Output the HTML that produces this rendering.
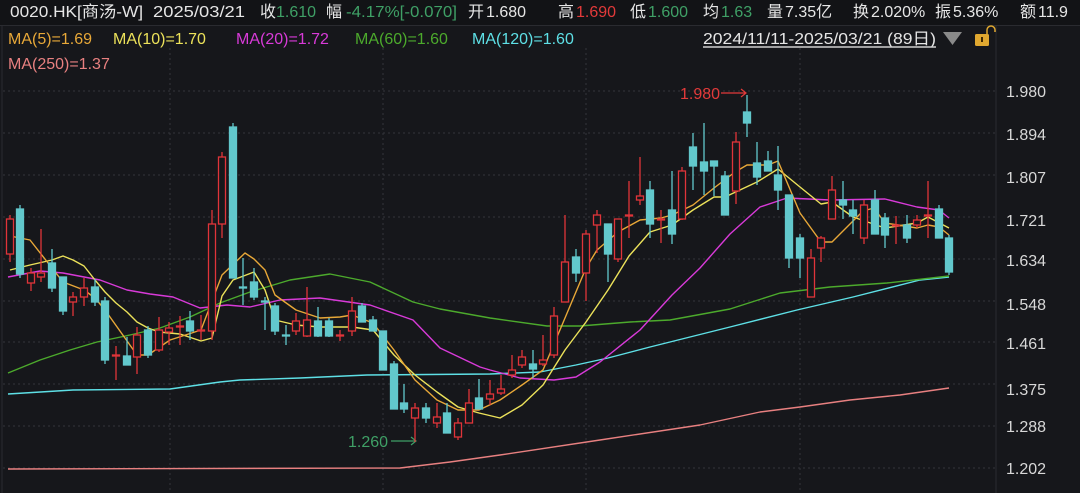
<!DOCTYPE html>
<html><head><meta charset="utf-8"><style>
html,body{margin:0;padding:0;background:#16171b;}
body{width:1080px;height:493px;overflow:hidden;position:relative;font-family:"Liberation Sans","Noto Sans CJK SC",sans-serif;}
svg{position:absolute;left:0;top:0;}
.t{font-family:"Liberation Sans","Noto Sans CJK SC",sans-serif;}
</style></head><body>
<svg width="1080" height="493" viewBox="0 0 1080 493">
<rect x="0" y="0" width="1080" height="493" fill="#16171b"/>
<rect x="0" y="0" width="1080" height="25" fill="#121316"/>
<line x1="0" y1="25.5" x2="1080" y2="25.5" stroke="#2a2b30"/>
<line x1="2" y1="26" x2="2" y2="493" stroke="#2a2b30"/>
<line x1="996" y1="26" x2="996" y2="493" stroke="#2a2b30"/>
<g stroke="#34353b" stroke-dasharray="2,3" stroke-width="1">
<line x1="3" y1="91" x2="995" y2="91"/><line x1="3" y1="133" x2="995" y2="133"/><line x1="3" y1="175" x2="995" y2="175"/><line x1="3" y1="217" x2="995" y2="217"/><line x1="3" y1="259" x2="995" y2="259"/><line x1="3" y1="301" x2="995" y2="301"/><line x1="3" y1="342" x2="995" y2="342"/><line x1="3" y1="384" x2="995" y2="384"/><line x1="3" y1="426" x2="995" y2="426"/><line x1="3" y1="468" x2="995" y2="468"/>
<line x1="170" y1="48" x2="170" y2="493"/><line x1="383" y1="48" x2="383" y2="493"/><line x1="586" y1="48" x2="586" y2="493"/><line x1="800" y1="48" x2="800" y2="493"/>
</g>
<g class="t" fill="#e6e6e6" font-size="16">
<text x="10" y="17" textLength="133" lengthAdjust="spacingAndGlyphs">0020.HK[商汤-W]</text>
<text x="153" y="17" textLength="92" lengthAdjust="spacingAndGlyphs">2025/03/21</text>
<text x="260" y="17">收</text><text x="276" y="17" fill="#3fa066">1.610</text>
<text x="326" y="17">幅</text><text x="346" y="17" fill="#3fa066" textLength="111" lengthAdjust="spacingAndGlyphs">-4.17%[-0.070]</text>
<text x="468" y="17">开</text><text x="486" y="17">1.680</text>
<text x="558" y="17">高</text><text x="576" y="17" fill="#e23a3a">1.690</text>
<text x="630" y="17">低</text><text x="648" y="17" fill="#3fa066">1.600</text>
<text x="703" y="17">均</text><text x="721" y="17" fill="#3fa066">1.63</text>
<text x="767" y="17">量</text><text x="785" y="17">7.35亿</text>
<text x="853" y="17">换</text><text x="871" y="17">2.020%</text>
<text x="935" y="17">振</text><text x="953" y="17">5.36%</text>
<text x="1020" y="17">额</text><text x="1038" y="17">11.9</text>
</g>
<g class="t" font-size="16">
<text x="8" y="44" fill="#e8a838">MA(5)=1.69</text>
<text x="113" y="44" fill="#ece25a">MA(10)=1.70</text>
<text x="236" y="44" fill="#d83ad8">MA(20)=1.72</text>
<text x="355" y="44" fill="#4caa2c">MA(60)=1.60</text>
<text x="472" y="44" fill="#5ee0e6">MA(120)=1.60</text>
<text x="8" y="69" fill="#e88080">MA(250)=1.37</text>
<text x="703" y="44" fill="#e6e6e6" textLength="233" lengthAdjust="spacingAndGlyphs">2024/11/11-2025/03/21 (89日)</text>
</g>
<line x1="703" y1="47" x2="936" y2="47" stroke="#cfcfcf" stroke-width="1.5"/>
<polygon points="943,32 962,32 952.5,45" fill="#8a8a8a"/>
<rect x="975" y="34" width="14" height="12" rx="1.5" fill="#e0a830"/>
<rect x="981" y="37" width="2" height="5" fill="#402800"/>
<path d="M987 34 V30 a4 4 0 0 1 8 0 V32" fill="none" stroke="#e0a830" stroke-width="1.5"/>
<g class="t" fill="#d8d8d8" font-size="16">
<text x="1006" y="97">1.980</text><text x="1006" y="140">1.894</text><text x="1006" y="183">1.807</text><text x="1006" y="226">1.721</text><text x="1006" y="266">1.634</text><text x="1006" y="310">1.548</text><text x="1006" y="349">1.461</text><text x="1006" y="395">1.375</text><text x="1006" y="432">1.288</text><text x="1006" y="474">1.202</text>
</g>
<text x="680" y="99" class="t" font-size="16" fill="#e23a3a">1.980</text>
<path d="M721 93 H746 M741 89 L746 93 L741 97" stroke="#e23a3a" fill="none" stroke-width="1.2"/>
<text x="348" y="447" class="t" font-size="16" fill="#3fa066">1.260</text>
<path d="M391 441 H416 M411 437 L416 441 L411 445" stroke="#3fa066" fill="none" stroke-width="1.2"/>
<g fill="none" stroke-width="1.4" stroke-linejoin="round">
<polyline stroke="#e88080" points="8,469 400,468 450,462 500,455 600,440 700,425 760,412 800,407 850,400 900,395 949,388"/>
<polyline stroke="#5ee0e6" points="8,394 73,390 170,389 220,382 240,380 300,378 367,375 490,374 540,372 576,365 608,358 650,347 690,337 730,327 797,310 853,297 920,280 949,277"/>
<polyline stroke="#4caa2c" points="8,373 40,360 70,350 97,342 130,335 160,328 190,317 220,303 250,292 290,280 330,274 370,282 413,302 440,309 490,318 547,326 580,326 630,322 670,320 730,309 780,293 830,287 887,283 949,276"/>
<polyline stroke="#d83ad8" points="8,277 40,271 63,273 100,280 127,290 150,294 173,297 200,308 227,305 250,307 280,300 320,298 370,305 413,320 440,348 480,367 490,370 520,378 554,380 576,377 600,362 640,330 672,295 700,268 730,234 760,207 787,198 830,200 885,199 917,207 939,210 949,218"/>
<polyline stroke="#ece25a" points="10,270 30,265 52,260 63,256 73,260 84,266 95,280 105,292 116,303 127,312 137,322 148,328 159,332 180,334 201,341 212,338 222,296 233,280 254,272 265,290 275,320 296,325 320,327 352,327 373,330 394,355 415,375 437,392 458,407 479,413 500,418 522,405 543,385 565,350 586,322 608,290 629,256 650,232 672,225 693,210 714,197 725,197 757,182 778,169 800,187 821,204 832,202 853,217 885,228 917,223 928,217 949,228"/>
<polyline stroke="#e8a838" points="10,236 30,240 63,282 84,290 95,298 105,310 137,355 148,355 170,340 201,330 222,275 245,253 254,259 265,270 275,295 296,310 320,318 340,317 352,315 373,323 394,350 415,380 437,400 458,410 479,410 500,400 522,385 543,370 565,318 586,268 597,250 618,232 640,220 661,218 672,215 693,205 714,188 735,172 747,165 768,165 778,161 800,213 821,242 832,242 863,211 874,208 885,223 917,228 928,225 939,227 949,235"/>
</g>
<g stroke-width="1.3">
<g stroke="#e0343a" fill="#16171b">
<line x1="10" y1="215" x2="10" y2="262"/><rect x="6.5" y="219" width="7" height="35"/>
<line x1="31" y1="268" x2="31" y2="291"/><rect x="27.5" y="273" width="7" height="10"/>
<line x1="41" y1="229" x2="41" y2="282"/><rect x="37.5" y="273" width="7" height="4"/>
<line x1="73" y1="292" x2="73" y2="316"/><rect x="69.5" y="297" width="7" height="5"/>
<line x1="84" y1="278" x2="84" y2="306"/><rect x="80.5" y="288" width="7" height="9"/>
<line x1="116" y1="346" x2="116" y2="380"/><rect x="112.5" y="355" width="7" height="1"/>
<line x1="137" y1="327" x2="137" y2="374"/><rect x="133.5" y="335" width="7" height="22"/>
<line x1="159" y1="317" x2="159" y2="352"/><rect x="155.5" y="330" width="7" height="20"/>
<line x1="169" y1="322" x2="169" y2="345"/><rect x="165.5" y="328" width="7" height="4"/>
<line x1="180" y1="316" x2="180" y2="345"/><rect x="176.5" y="326" width="7" height="1"/>
<line x1="201" y1="315" x2="201" y2="340"/><rect x="197.5" y="330" width="7" height="1"/>
<line x1="212" y1="210" x2="212" y2="340"/><rect x="208.5" y="224" width="7" height="107"/>
<line x1="222" y1="152" x2="222" y2="238"/><rect x="218.5" y="157" width="7" height="67"/>
<line x1="296" y1="313" x2="296" y2="335"/><rect x="292.5" y="321" width="7" height="10"/>
<line x1="307" y1="287" x2="307" y2="337"/><rect x="303.5" y="320" width="7" height="16"/>
<line x1="340" y1="330" x2="340" y2="341"/><rect x="336.5" y="335" width="7" height="1"/>
<line x1="352" y1="297" x2="352" y2="336"/><rect x="348.5" y="311" width="7" height="20"/>
<line x1="415" y1="403" x2="415" y2="442"/><rect x="411.5" y="408" width="7" height="10"/>
<line x1="437" y1="403" x2="437" y2="428"/><rect x="433.5" y="417" width="7" height="6"/>
<line x1="458" y1="418" x2="458" y2="440"/><rect x="454.5" y="423" width="7" height="14"/>
<line x1="469" y1="389" x2="469" y2="423"/><rect x="465.5" y="403" width="7" height="20"/>
<line x1="490" y1="380" x2="490" y2="405"/><rect x="486.5" y="394" width="7" height="5"/>
<line x1="501" y1="375" x2="501" y2="395"/><rect x="497.5" y="389" width="7" height="4"/>
<line x1="512" y1="355" x2="512" y2="378"/><rect x="508.5" y="370" width="7" height="5"/>
<line x1="522" y1="350" x2="522" y2="368"/><rect x="518.5" y="357" width="7" height="8"/>
<line x1="543" y1="335" x2="543" y2="366"/><rect x="539.5" y="360" width="7" height="4"/>
<line x1="554" y1="307" x2="554" y2="358"/><rect x="550.5" y="316" width="7" height="39"/>
<line x1="565" y1="215" x2="565" y2="302"/><rect x="561.5" y="262" width="7" height="40"/>
<line x1="586" y1="230" x2="586" y2="301"/><rect x="582.5" y="234" width="7" height="39"/>
<line x1="597" y1="210" x2="597" y2="253"/><rect x="593.5" y="215" width="7" height="10"/>
<line x1="618" y1="219" x2="618" y2="262"/><rect x="614.5" y="219" width="7" height="40"/>
<line x1="629" y1="181" x2="629" y2="238"/><rect x="625.5" y="215" width="7" height="1"/>
<line x1="640" y1="157" x2="640" y2="205"/><rect x="636.5" y="196" width="7" height="4"/>
<line x1="661" y1="210" x2="661" y2="243"/><rect x="657.5" y="219" width="7" height="1"/>
<line x1="682" y1="167" x2="682" y2="220"/><rect x="678.5" y="171" width="7" height="48"/>
<line x1="736" y1="132" x2="736" y2="204"/><rect x="732.5" y="142" width="7" height="49"/>
<line x1="811" y1="249" x2="811" y2="297"/><rect x="807.5" y="258" width="7" height="39"/>
<line x1="821" y1="236" x2="821" y2="262"/><rect x="817.5" y="238" width="7" height="10"/>
<line x1="832" y1="176" x2="832" y2="219"/><rect x="828.5" y="190" width="7" height="29"/>
<line x1="864" y1="200" x2="864" y2="244"/><rect x="860.5" y="205" width="7" height="33"/>
<line x1="896" y1="216" x2="896" y2="244"/><rect x="892.5" y="225" width="7" height="1"/>
<line x1="917" y1="215" x2="917" y2="228"/><rect x="913.5" y="220" width="7" height="5"/>
<line x1="928" y1="181" x2="928" y2="238"/><rect x="924.5" y="215" width="7" height="1"/>
</g>
<g stroke="#62c8cc" fill="#62c8cc">
<line x1="20" y1="205" x2="20" y2="278"/><rect x="16.5" y="209" width="7" height="65"/>
<line x1="52" y1="249" x2="52" y2="292"/><rect x="48.5" y="263" width="7" height="25"/>
<line x1="63" y1="277" x2="63" y2="315"/><rect x="59.5" y="277" width="7" height="34"/>
<line x1="95" y1="279" x2="95" y2="306"/><rect x="91.5" y="287" width="7" height="15"/>
<line x1="105" y1="297" x2="105" y2="364"/><rect x="101.5" y="301" width="7" height="59"/>
<line x1="127" y1="337" x2="127" y2="365"/><rect x="123.5" y="356" width="7" height="9"/>
<line x1="148" y1="326" x2="148" y2="358"/><rect x="144.5" y="330" width="7" height="25"/>
<line x1="190" y1="311" x2="190" y2="340"/><rect x="186.5" y="321" width="7" height="10"/>
<line x1="233" y1="123" x2="233" y2="278"/><rect x="229.5" y="127" width="7" height="151"/>
<line x1="243" y1="258" x2="243" y2="305"/><rect x="239.5" y="287" width="7" height="1"/>
<line x1="254" y1="268" x2="254" y2="300"/><rect x="250.5" y="282" width="7" height="15"/>
<line x1="265" y1="297" x2="265" y2="330"/><rect x="261.5" y="301" width="7" height="1"/>
<line x1="275" y1="303" x2="275" y2="335"/><rect x="271.5" y="306" width="7" height="25"/>
<line x1="286" y1="325" x2="286" y2="345"/><rect x="282.5" y="335" width="7" height="1"/>
<line x1="318" y1="307" x2="318" y2="337"/><rect x="314.5" y="321" width="7" height="15"/>
<line x1="329" y1="318" x2="329" y2="337"/><rect x="325.5" y="321" width="7" height="15"/>
<line x1="362" y1="303" x2="362" y2="322"/><rect x="358.5" y="306" width="7" height="16"/>
<line x1="373" y1="316" x2="373" y2="331"/><rect x="369.5" y="320" width="7" height="11"/>
<line x1="383" y1="331" x2="383" y2="370"/><rect x="379.5" y="331" width="7" height="39"/>
<line x1="394" y1="361" x2="394" y2="409"/><rect x="390.5" y="364" width="7" height="45"/>
<line x1="404" y1="384" x2="404" y2="413"/><rect x="400.5" y="403" width="7" height="6"/>
<line x1="426" y1="403" x2="426" y2="423"/><rect x="422.5" y="408" width="7" height="10"/>
<line x1="447" y1="403" x2="447" y2="433"/><rect x="443.5" y="413" width="7" height="20"/>
<line x1="479" y1="379" x2="479" y2="409"/><rect x="475.5" y="398" width="7" height="11"/>
<line x1="533" y1="350" x2="533" y2="378"/><rect x="529.5" y="364" width="7" height="5"/>
<line x1="576" y1="249" x2="576" y2="282"/><rect x="572.5" y="257" width="7" height="16"/>
<line x1="608" y1="224" x2="608" y2="282"/><rect x="604.5" y="224" width="7" height="30"/>
<line x1="650" y1="181" x2="650" y2="238"/><rect x="646.5" y="190" width="7" height="34"/>
<line x1="672" y1="171" x2="672" y2="244"/><rect x="668.5" y="210" width="7" height="24"/>
<line x1="693" y1="133" x2="693" y2="190"/><rect x="689.5" y="147" width="7" height="19"/>
<line x1="704" y1="123" x2="704" y2="195"/><rect x="700.5" y="162" width="7" height="9"/>
<line x1="714" y1="161" x2="714" y2="196"/><rect x="710.5" y="161" width="7" height="5"/>
<line x1="725" y1="171" x2="725" y2="215"/><rect x="721.5" y="176" width="7" height="39"/>
<line x1="747" y1="95" x2="747" y2="137"/><rect x="743.5" y="112" width="7" height="11"/>
<line x1="757" y1="142" x2="757" y2="185"/><rect x="753.5" y="163" width="7" height="14"/>
<line x1="768" y1="151" x2="768" y2="171"/><rect x="764.5" y="161" width="7" height="10"/>
<line x1="778" y1="146" x2="778" y2="210"/><rect x="774.5" y="175" width="7" height="15"/>
<line x1="789" y1="195" x2="789" y2="268"/><rect x="785.5" y="195" width="7" height="63"/>
<line x1="800" y1="234" x2="800" y2="278"/><rect x="796.5" y="238" width="7" height="20"/>
<line x1="843" y1="181" x2="843" y2="219"/><rect x="839.5" y="200" width="7" height="5"/>
<line x1="853" y1="200" x2="853" y2="234"/><rect x="849.5" y="210" width="7" height="6"/>
<line x1="875" y1="190" x2="875" y2="234"/><rect x="871.5" y="200" width="7" height="34"/>
<line x1="885" y1="213" x2="885" y2="248"/><rect x="881.5" y="218" width="7" height="17"/>
<line x1="907" y1="215" x2="907" y2="243"/><rect x="903.5" y="225" width="7" height="13"/>
<line x1="939" y1="205" x2="939" y2="238"/><rect x="935.5" y="209" width="7" height="29"/>
<line x1="949" y1="235" x2="949" y2="275"/><rect x="945.5" y="238" width="7" height="34"/>
</g>
</g>
</svg>
</body></html>
